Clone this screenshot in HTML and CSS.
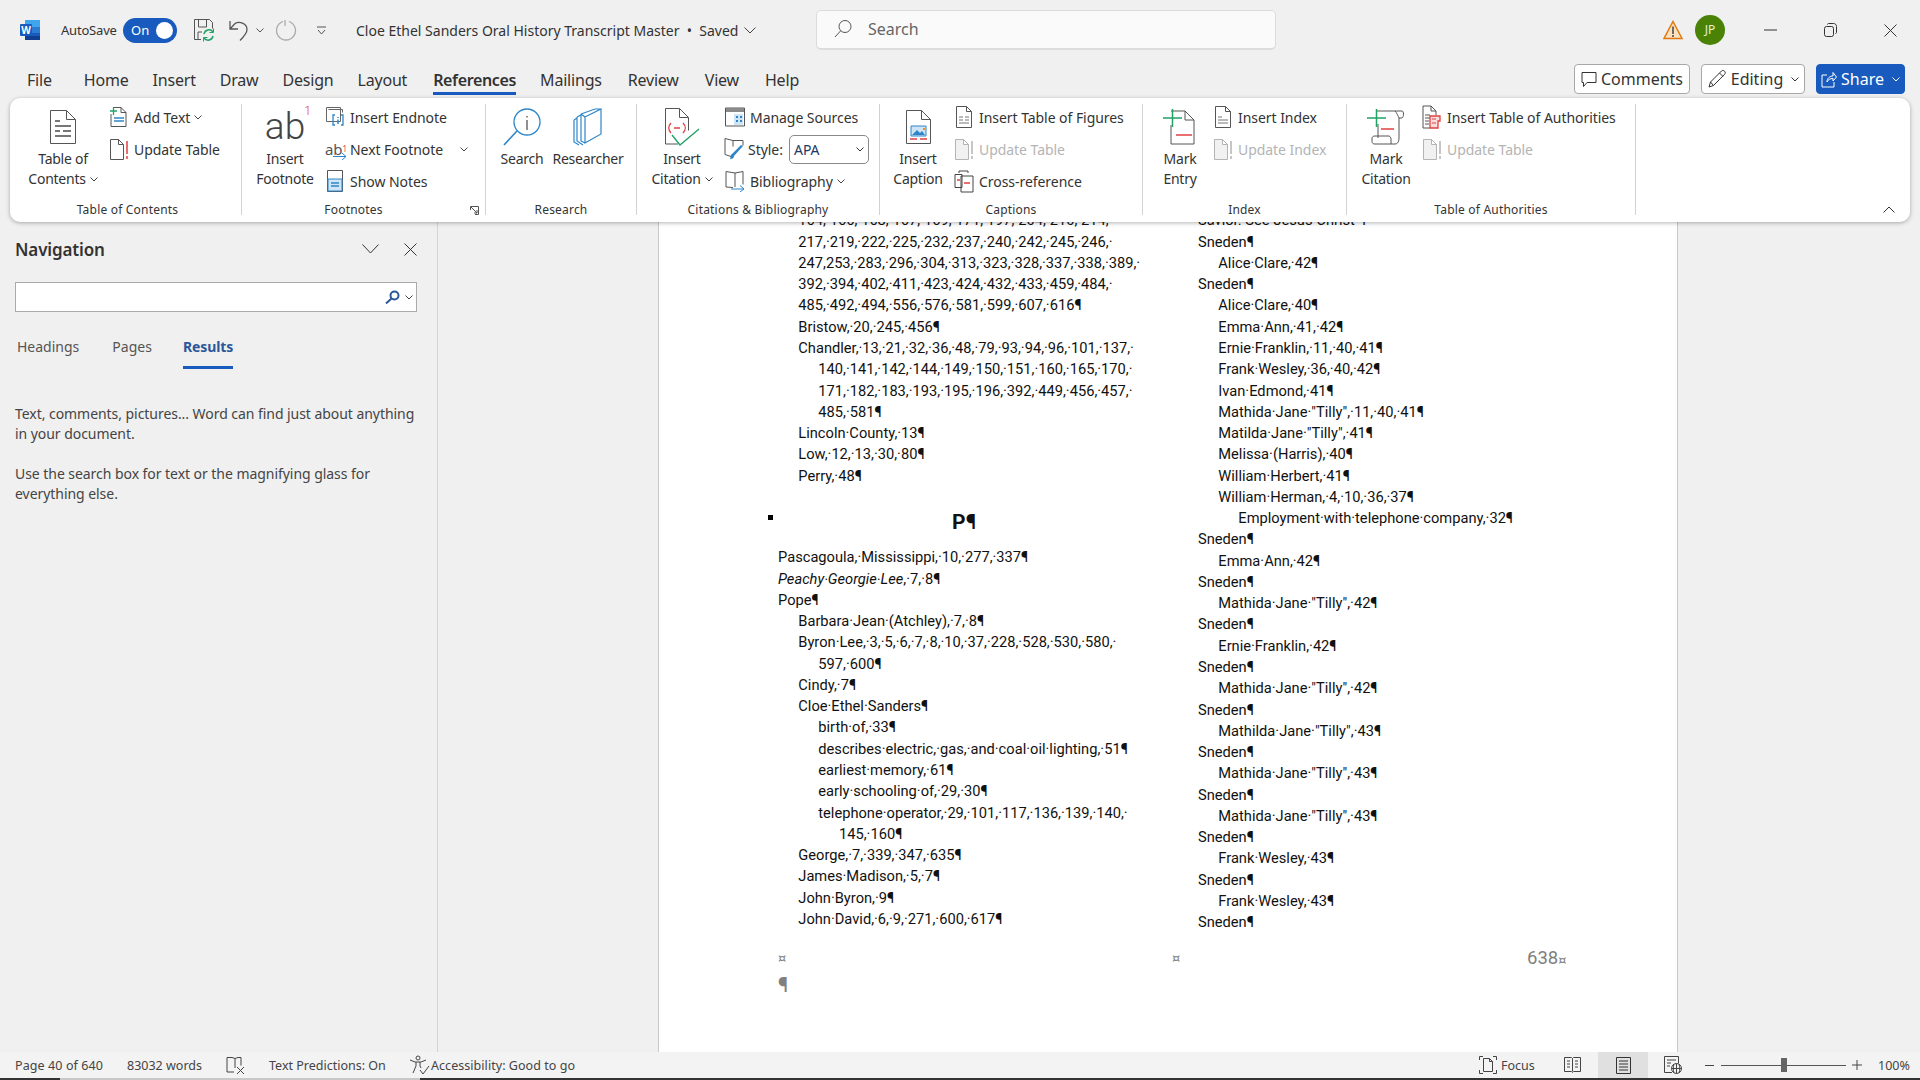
FILE: index.html
```html
<!DOCTYPE html>
<html lang="en">

<head>
	<meta charset="UTF-8">
	<title>Cloe Ethel Sanders Oral History Transcript Master</title>
	<link rel="stylesheet" href="styles.css">
</head>

<body>
	<div class="titlebar">
		<div class="tb_left">
			<svg class="logo" width="20" height="20" viewBox="0 0 20 20"><rect x="5" width="15" height="7" fill="#41a5ee"/><rect x="5" y="7" width="15" height="6" fill="#2b7cd3"/><rect x="5" y="13" width="15" height="7" fill="#185abd"/><rect x="5" y="16" width="15" height="4" fill="#103f91"/><rect y="4" width="12" height="12" rx="1" fill="#185abd"/><text x="6" y="14" font-size="10" font-weight="700" fill="#fff" text-anchor="middle">W</text></svg>
			<span class="autosave">AutoSave</span>
			<span class="toggle">On<i></i></span>
			<svg class="save_ic" width="22" height="24" viewBox="0 0 22 24" fill="none" stroke="#555"><path d="M1.5 1.5h15l3 3v6M8 21.5H1.5v-20M5.5 2v7h8V2M5 21v-7h4"/><path d="M11 16a5 5 0 0 1 9-2M20 18a5 5 0 0 1-9 2" stroke="#21a366" stroke-width="1.5"/><path d="M20.5 10.5v4h-4M10.5 23.5v-4h4" stroke="#21a366"/></svg>
			<svg class="undo_ic" width="19" height="24" viewBox="0 0 19 24" fill="none" stroke="#555" stroke-width="1.3"><path d="M1 3v8h8M1.5 10.5L6 5.5c4-2.5 12-.5 12 6 0 4-3 7-7 11"/></svg>
			<svg class="chev_ic undo_chev" width="8" height="5" viewBox="0 0 8 5" fill="none" stroke="#555"><path d="M.5.5L4 4 7.5.5"/></svg>
			<svg class="redo_ic" width="21" height="24" viewBox="0 0 21 24" fill="none" stroke="#aaa" stroke-width="1.3"><path d="M9 2v6M7 3.5a9.5 9.5 0 1 0 6 0"/></svg>
			<svg class="cust_ic" width="9" height="9" viewBox="0 0 9 9" fill="none" stroke="#555"><path d="M0 1h9M1 4l3.5 4L8 4"/></svg>
			<span class="doc_title">Cloe Ethel Sanders Oral History Transcript Master &nbsp;•&nbsp; Saved</span>
			<svg class="title_chev" width="12" height="7" viewBox="0 0 12 7" fill="none" stroke="#444"><path d="M.5.5L6 6l5.5-5.5"/></svg>
		</div>
		<div class="tb_search">
			<svg width="18" height="20" viewBox="0 0 18 20" fill="none" stroke="#555"><circle cx="11" cy="7.5" r="6"/><path d="M6.5 12L1 18"/></svg>
			<span>Search</span>
		</div>
		<div class="tb_right">
			<svg class="warn_ic" width="20" height="20" viewBox="0 0 20 20"><path d="M10 1.5L19 18.5H1z" fill="#fbe3c0" stroke="#e07a10" stroke-width="1.5"/><path d="M10 6.5v7.5M10 15v2" stroke="#444" stroke-width="1.5"/></svg>
			<span class="avatar">JP</span>
			<svg class="win_min" width="13" height="2" viewBox="0 0 13 2"><path d="M0 1h13" stroke="#333"/></svg>
			<svg class="win_max" width="13" height="14" viewBox="0 0 13 14" fill="none" stroke="#333"><rect x=".5" y="3.5" width="9" height="10" rx="2"/><path d="M3.5 1.5c0-.6.5-1 1-1h5c1.8 0 3 1.2 3 3v6c0 .6-.4 1-1 1"/></svg>
			<svg class="win_close" width="13" height="13" viewBox="0 0 13 13" stroke="#333"><path d="M.5.5l12 12M12.5.5l-12 12"/></svg>
		</div>
	</div>

	<div class="tabbar">
		<span class="tab tab_file">File</span>
		<span class="tab">Home</span>
		<span class="tab">Insert</span>
		<span class="tab">Draw</span>
		<span class="tab">Design</span>
		<span class="tab">Layout</span>
		<span class="tab tab_on">References</span>
		<span class="tab">Mailings</span>
		<span class="tab">Review</span>
		<span class="tab">View</span>
		<span class="tab">Help</span>
		<div class="tab_btns">
			<span class="btn btn_comments"><svg width="16" height="17" viewBox="0 0 16 17" fill="none" stroke="#333"><path d="M1 1.5h14v10H6l-3.5 4v-4H1z"/></svg>Comments</span>
			<span class="btn btn_editing"><svg width="20" height="20" viewBox="0 0 20 20" fill="none" stroke="#333"><path d="M2 18l1.5-5L14.5 2c1-.8 2-.8 3 .2s1 2 .2 3L6.5 16.5zM3.5 13l3 3.5M12.5 4l3.5 3.5"/></svg>Editing<svg class="btn_chev" width="8" height="5" viewBox="0 0 8 5" fill="none" stroke="#333"><path d="M.5.5L4 4 7.5.5"/></svg></span>
			<span class="btn btn_share"><svg width="16" height="18" viewBox="0 0 16 18" fill="none" stroke="#fff"><path d="M6 5H1v12h12v-5M6 12c0-4 3-6 6-6V2.5L15.5 7 12 11V8.5c-3 0-5 1-6 3.5z"/></svg>Share<svg class="btn_chev" width="8" height="5" viewBox="0 0 8 5" fill="none" stroke="#fff"><path d="M.5.5L4 4 7.5.5"/></svg></span>
		</div>
	</div>

	<div class="ribbon">
		<div class="group g_toc">
			<div class="group_body">
				<div class="big">
					<span class="big_ic"><svg width="28" height="36" viewBox="0 0 28 36" fill="none" stroke="#555"><path d="M1.5 1.5h16l9 9v24h-25zM17.5 1.5v9h9"/><path d="M6 12h5M6 17h16M6 22h5M14 22h8M6 27h16" stroke="#777" stroke-width="2"/></svg></span>
					<span class="big_txt">Table of<br>Contents<svg class="chev_ic" width="8" height="5" viewBox="0 0 8 5" fill="none" stroke="#444"><path d="M.5.5L4 4 7.5.5"/></svg></span>
				</div>
				<div class="smalls">
					<div class="sm"><span class="sm_ic"><svg width="19" height="22" viewBox="0 0 19 22" fill="none" stroke="#555"><path d="M5 1.5h7l5 5v14H2V8M12 1.5v5h5"/><path d="M1 5h7M4.5 1v8" stroke="#21a366" stroke-width="1.3"/><path d="M5 12h10M5 15h10" stroke="#2e86c9" stroke-width="1.3"/></svg></span>Add Text<svg class="chev_ic" width="8" height="5" viewBox="0 0 8 5" fill="none" stroke="#444"><path d="M.5.5L4 4 7.5.5"/></svg></div>
					<div class="sm"><span class="sm_ic"><svg width="20" height="23" viewBox="0 0 20 23" fill="none"><path d="M1.5 1.5h8l5 5v15h-13zM9.5 1.5v5h5" stroke="#555"/><path d="M18 3v13M18 18v3" stroke="#e04040" stroke-width="1.5"/></svg></span>Update Table</div>
				</div>
			</div>
			<div class="group_name">Table of Contents</div>
		</div>

		<div class="group g_foot">
			<div class="group_body">
				<div class="big">
					<span class="big_ic ab_ic">ab<sup>1</sup></span>
					<span class="big_txt">Insert<br>Footnote</span>
				</div>
				<div class="smalls">
					<div class="sm"><span class="sm_ic"><svg width="20" height="22" viewBox="0 0 20 22" fill="none"><path d="M1.5 1.5h14v14h-14z" stroke="#666"/><path d="M3.5 3.5h14v3" stroke="#666"/><path d="M10 9H8v10h2M16 9h2v10h-2" stroke="#2e86c9" stroke-width="1.3"/><path d="M13 11v1M13 13.5V18" stroke="#2e86c9" stroke-width="1.5"/></svg></span>Insert Endnote</div>
					<div class="sm"><span class="sm_ic mini_ab">ab<sup>1</sup><svg width="14" height="9" viewBox="0 0 14 9" fill="none" stroke="#2e86c9"><path d="M0 4.5h13M9 1l4 3.5L9 8"/></svg></span>Next Footnote<svg class="chev_ic next_chev" width="8" height="5" viewBox="0 0 8 5" fill="none" stroke="#444"><path d="M.5.5L4 4 7.5.5"/></svg></div>
					<div class="sm"><span class="sm_ic"><svg class="show_ic" width="16" height="22" viewBox="0 0 16 22" fill="none" stroke="#2e86c9"><path d="M.5.5h15v21H.5z" stroke="#555"/><path d="M1 9h14v12H1z" fill="#cfe4f5"/><path d="M4 13h8M4 16h8" stroke-width="1.3"/></svg></span>Show Notes</div>
				</div>
			</div>
			<div class="group_name">Footnotes</div>
			<svg class="launcher" width="9" height="9" viewBox="0 0 9 9" fill="none" stroke="#555"><path d="M.5 4V.5H8.5v8H5M1 1l6 6M7 4v3H4"/></svg>
		</div>

		<div class="group g_res">
			<div class="group_body">
				<div class="big big_search">
					<span class="big_ic"><svg width="38" height="38" viewBox="0 0 38 38" fill="none" stroke="#2e86c9" stroke-width="1.3"><circle cx="24" cy="14" r="13"/><path d="M14 23L1 37" stroke-width="1.6"/><path d="M24 8v1.5M24 12v10" stroke="#555"/></svg></span>
					<span class="big_txt">Search</span>
				</div>
				<div class="big big_researcher">
					<span class="big_ic"><svg width="30" height="38" viewBox="0 0 30 38" fill="none" stroke="#2e86c9" stroke-width="1.2"><path d="M12 9L28 1v25l-16 9zM12 9L8 6M8 6L22 1l6 0M8 6v27l4 2M4 9v24l6 4M4 9l4-2M1 12v22l5 3M1 12l3-2"/></svg></span>
					<span class="big_txt">Researcher</span>
				</div>
			</div>
			<div class="group_name">Research</div>
		</div>

		<div class="group g_cite">
			<div class="group_body">
				<div class="big">
					<span class="big_ic"><svg width="36" height="40" viewBox="0 0 36 40" fill="none"><path d="M14 37H1.5V1.5h14l9 9v13M15.5 1.5v9h9" stroke="#555"/><path d="M7 16c-3 3-3 7 0 10M19 16c3 3 3 7 0 10M10 21h6" stroke="#e04040" stroke-width="1.3"/><path d="M8 28l8 10L35 22" stroke="#21a366" stroke-width="1.4"/></svg></span>
					<span class="big_txt">Insert<br>Citation<svg class="chev_ic" width="8" height="5" viewBox="0 0 8 5" fill="none" stroke="#444"><path d="M.5.5L4 4 7.5.5"/></svg></span>
				</div>
				<div class="smalls">
					<div class="sm"><span class="sm_ic"><svg width="20" height="20" viewBox="0 0 20 20" fill="none"><path d="M.5 1h19v18H.5z" stroke="#555"/><path d="M1 1h18v4H1z" fill="#8a8a8a"/><path d="M9 7h9v11H9z" fill="#cfe4f5"/><path d="M11 9h2v2h-2zM15 9h2v2h-2zM11 13h2v2h-2zM15 13h2v2h-2z" fill="#2e86c9"/></svg></span>Manage Sources</div>
					<div class="sm"><span class="style_ic"><svg width="21" height="24" viewBox="0 0 21 24" fill="none"><path d="M1 1.5l8 2 10 0v5M9 3.5v6M1 1.5v16l6 2" stroke="#555"/><path d="M6 22c3 0 4-1 4-3l9-10-2-1-9 9c-2 1-1 3-2 5z" fill="#2e86c9"/></svg></span><span class="style_lbl">Style:</span><span class="style_sel">APA<svg width="8" height="5" viewBox="0 0 8 5" fill="none" stroke="#333"><path d="M.5.5L4 4 7.5.5"/></svg></span></div>
					<div class="sm"><span class="sm_ic"><svg width="20" height="22" viewBox="0 0 20 22" fill="none"><path d="M10 3v14M1 1.5l9 1.5 8-1.5v13M1 1.5V17l7 .5" stroke="#555"/><path d="M6 19h13M15 15.5l4 3.5-4 3" stroke="#2e86c9"/></svg></span>Bibliography<svg class="chev_ic" width="8" height="5" viewBox="0 0 8 5" fill="none" stroke="#444"><path d="M.5.5L4 4 7.5.5"/></svg></div>
				</div>
			</div>
			<div class="group_name">Citations &amp; Bibliography</div>
		</div>

		<div class="group g_cap">
			<div class="group_body">
				<div class="big">
					<span class="big_ic"><svg width="27" height="36" viewBox="0 0 27 36" fill="none"><path d="M1.5 1.5h15l9 9v24h-24zM16.5 1.5v9h9" stroke="#555"/><path d="M6 17h15v10H6z" fill="#cfe4f5" stroke="#2e86c9"/><path d="M7 26l5-5 3 3 2-2 3 4z" fill="#2e86c9"/><path d="M18 19h2v2h-2z" fill="#e8922c"/><path d="M5 30h7M15 30h7" stroke="#e04040" stroke-width="1.3"/></svg></span>
					<span class="big_txt">Insert<br>Caption</span>
				</div>
				<div class="smalls">
					<div class="sm"><span class="sm_ic"><svg class="tf_ic" width="16" height="22" viewBox="0 0 16 22" fill="none" stroke="#555"><path d="M.5.5h10l5 5v16H.5zM10.5.5v5h5"/><path d="M3 11h4M9 11h4M3 14h4M9 14h4M3 17h10" stroke="#777"/></svg></span>Insert Table of Figures</div>
					<div class="sm sm_off"><span class="sm_ic"><svg width="20" height="23" viewBox="0 0 20 23" fill="none" stroke="#b4b4b4"><path d="M1.5 1.5h8l5 5v15h-13zM9.5 1.5v5h5" fill="#f1f1f1"/><path d="M18 3v13M18 18v3" stroke-width="1.5"/></svg></span>Update Table</div>
					<div class="sm"><span class="sm_ic"><svg width="20" height="23" viewBox="0 0 20 23" fill="none" stroke="#444"><path d="M5 3V1h9v2M1 4.5h7v13H1zM7 6h12v16H7z" fill="#fff"/><path d="M3 10h3M10 13h6" stroke="#e04040" stroke-width="1.4"/></svg></span>Cross-reference</div>
				</div>
			</div>
			<div class="group_name">Captions</div>
		</div>

		<div class="group g_idx">
			<div class="group_body">
				<div class="big">
					<span class="big_ic"><svg width="34" height="38" viewBox="0 0 34 38" fill="none"><path d="M8 3h14l9 9v24H8V17M22 3v9h9" stroke="#555"/><path d="M0 10h19M9.5 1v18" stroke="#21a366" stroke-width="1.5"/><path d="M13 27h16" stroke="#e04040" stroke-width="1.5"/></svg></span>
					<span class="big_txt">Mark<br>Entry</span>
				</div>
				<div class="smalls">
					<div class="sm"><span class="sm_ic"><svg class="tf_ic" width="16" height="22" viewBox="0 0 16 22" fill="none" stroke="#555"><path d="M.5.5h10l5 5v16H.5zM10.5.5v5h5"/><path d="M3 11h4M3 14h10M3 17h10" stroke="#777"/></svg></span>Insert Index</div>
					<div class="sm sm_off"><span class="sm_ic"><svg width="20" height="23" viewBox="0 0 20 23" fill="none" stroke="#b4b4b4"><path d="M1.5 1.5h8l5 5v15h-13zM9.5 1.5v5h5" fill="#f1f1f1"/><path d="M18 3v13M18 18v3" stroke-width="1.5"/></svg></span>Update Index</div>
				</div>
			</div>
			<div class="group_name">Index</div>
		</div>

		<div class="group g_auth">
			<div class="group_body">
				<div class="big">
					<span class="big_ic"><svg width="38" height="38" viewBox="0 0 38 38" fill="none"><path d="M10 3h25c2 0 2 6 0 7h-3v20c0 3-1 6-4 6H8c-3 0-3-2-3-3v-3c0-1 1-2 3-2h14c1 0 2 2 2 3v5M11 16v14M28 3c2 2 3 5 4 7" stroke="#555"/><path d="M0 10h19M9.5 1v18" stroke="#21a366" stroke-width="1.5"/><path d="M14 21h13" stroke="#e04040" stroke-width="1.5"/></svg></span>
					<span class="big_txt">Mark<br>Citation</span>
				</div>
				<div class="smalls">
					<div class="sm"><span class="sm_ic"><svg width="19" height="24" viewBox="0 0 19 24" fill="none"><path d="M8 23H1V1h8l5 5v4M9 1v5h5M3 10h5M3 13h5M3 16h4M3 19h4" stroke="#555"/><path d="M8 11h10v5h-2v7H8z" stroke="#e04040" stroke-width="1.3" fill="#fbdcdc"/><path d="M10 14h4M10 18h4" stroke="#e04040"/></svg></span>Insert Table of Authorities</div>
					<div class="sm sm_off"><span class="sm_ic"><svg width="20" height="23" viewBox="0 0 20 23" fill="none" stroke="#b4b4b4"><path d="M1.5 1.5h8l5 5v15h-13zM9.5 1.5v5h5" fill="#f1f1f1"/><path d="M18 3v13M18 18v3" stroke-width="1.5"/></svg></span>Update Table</div>
				</div>
			</div>
			<div class="group_name">Table of Authorities</div>
		</div>
		<svg class="collapse" width="12" height="7" viewBox="0 0 12 7" fill="none" stroke="#333"><path d="M.5 6.5L6 1l5.5 5.5"/></svg>
	</div>

	<div class="main">
		<div class="nav">
			<div class="nav_head">
				<span class="nav_title">Navigation</span>
				<svg class="nav_chev" width="17" height="10" viewBox="0 0 17 10" fill="none" stroke="#333"><path d="M.5.5l8 8.5 8-8.5"/></svg>
				<svg class="nav_x" width="13" height="13" viewBox="0 0 13 13" stroke="#333"><path d="M.5.5l12 12M12.5.5l-12 12"/></svg>
			</div>
			<div class="nav_search">
				<svg width="15" height="14" viewBox="0 0 15 14" fill="none" stroke="#2b579a" stroke-width="2"><circle cx="9.5" cy="5.5" r="4"/><path d="M6.5 8.5L1 13.5"/></svg>
				<svg width="8" height="5" viewBox="0 0 8 5" fill="none" stroke="#444"><path d="M.5.5L4 4 7.5.5"/></svg>
			</div>
			<div class="nav_tabs">
				<span>Headings</span>
				<span>Pages</span>
				<span class="nav_on">Results</span>
			</div>
			<p class="nav_txt">Text, comments, pictures... Word can find just about anything in your document.</p>
			<p class="nav_txt">Use the search box for text or the magnifying glass for everything else.</p>
		</div>

		<div class="docarea">
			<div class="page">
				<div class="cols">
					<div class="col">
						<p class="lv1">164,·166,·168,·167,·169,·171,·197,·204,·210,·214,·</p>
						<p class="lv1">217,·219,·222,·225,·232,·237,·240,·242,·245,·246,·</p>
						<p class="lv1">247,253,·283,·296,·304,·313,·323,·328,·337,·338,·389,·</p>
						<p class="lv1">392,·394,·402,·411,·423,·424,·432,·433,·459,·484,·</p>
						<p class="lv1">485,·492,·494,·556,·576,·581,·599,·607,·616¶</p>
						<p class="lv1">Bristow,·20,·245,·456¶</p>
						<p class="lv1">Chandler,·13,·21,·32,·36,·48,·79,·93,·94,·96,·101,·137,·</p>
						<p class="lv2">140,·141,·142,·144,·149,·150,·151,·160,·165,·170,·</p>
						<p class="lv2">171,·182,·183,·193,·195,·196,·392,·449,·456,·457,·</p>
						<p class="lv2">485,·581¶</p>
						<p class="lv1">Lincoln·County,·13¶</p>
						<p class="lv1">Low,·12,·13,·30,·80¶</p>
						<p class="lv1">Perry,·48¶</p>
						<h2 class="letter">P¶</h2>
						<p class="lv0">Pascagoula,·Mississippi,·10,·277,·337¶</p>
						<p class="lv0"><em>Peachy·Georgie·Lee</em>,·7,·8¶</p>
						<p class="lv0">Pope¶</p>
						<p class="lv1">Barbara·Jean·(Atchley),·7,·8¶</p>
						<p class="lv1">Byron·Lee,·3,·5,·6,·7,·8,·10,·37,·228,·528,·530,·580,·</p>
						<p class="lv2">597,·600¶</p>
						<p class="lv1">Cindy,·7¶</p>
						<p class="lv1">Cloe·Ethel·Sanders¶</p>
						<p class="lv2">birth·of,·33¶</p>
						<p class="lv2">describes·electric,·gas,·and·coal·oil·lighting,·51¶</p>
						<p class="lv2">earliest·memory,·61¶</p>
						<p class="lv2">early·schooling·of,·29,·30¶</p>
						<p class="lv2">telephone·operator,·29,·101,·117,·136,·139,·140,·</p>
						<p class="lv3">145,·160¶</p>
						<p class="lv1">George,·7,·339,·347,·635¶</p>
						<p class="lv1">James·Madison,·5,·7¶</p>
						<p class="lv1">John·Byron,·9¶</p>
						<p class="lv1">John·David,·6,·9,·271,·600,·617¶</p>
					</div>
					<div class="col">
						<p class="lv0">Savior.·See·Jesus·Christ·¶</p>
						<p class="lv0">Sneden¶</p>
						<p class="lv1">Alice·Clare,·42¶</p>
						<p class="lv0">Sneden¶</p>
						<p class="lv1">Alice·Clare,·40¶</p>
						<p class="lv1">Emma·Ann,·41,·42¶</p>
						<p class="lv1">Ernie·Franklin,·11,·40,·41¶</p>
						<p class="lv1">Frank·Wesley,·36,·40,·42¶</p>
						<p class="lv1">Ivan·Edmond,·41¶</p>
						<p class="lv1">Mathida·Jane·"Tilly",·11,·40,·41¶</p>
						<p class="lv1">Matilda·Jane·"Tilly",·41¶</p>
						<p class="lv1">Melissa·(Harris),·40¶</p>
						<p class="lv1">William·Herbert,·41¶</p>
						<p class="lv1">William·Herman,·4,·10,·36,·37¶</p>
						<p class="lv2">Employment·with·telephone·company,·32¶</p>
						<p class="lv0">Sneden¶</p>
						<p class="lv1">Emma·Ann,·42¶</p>
						<p class="lv0">Sneden¶</p>
						<p class="lv1">Mathida·Jane·"Tilly",·42¶</p>
						<p class="lv0">Sneden¶</p>
						<p class="lv1">Ernie·Franklin,·42¶</p>
						<p class="lv0">Sneden¶</p>
						<p class="lv1">Mathida·Jane·"Tilly",·42¶</p>
						<p class="lv0">Sneden¶</p>
						<p class="lv1">Mathilda·Jane·"Tilly",·43¶</p>
						<p class="lv0">Sneden¶</p>
						<p class="lv1">Mathida·Jane·"Tilly",·43¶</p>
						<p class="lv0">Sneden¶</p>
						<p class="lv1">Mathida·Jane·"Tilly",·43¶</p>
						<p class="lv0">Sneden¶</p>
						<p class="lv1">Frank·Wesley,·43¶</p>
						<p class="lv0">Sneden¶</p>
						<p class="lv1">Frank·Wesley,·43¶</p>
						<p class="lv0">Sneden¶</p>
					</div>
				</div>
				<div class="page_foot">
					<span class="pf_a">¤</span>
					<span class="pf_b">¤</span>
					<span class="pf_num">638<small>¤</small></span>
				</div>
				<div class="page_end">¶</div>
			</div>
		</div>
	</div>

	<div class="status">
		<span class="st_page">Page 40 of 640</span>
		<span class="st_words">83032 words</span>
		<svg class="st_proof" width="19" height="19" viewBox="0 0 19 19" fill="none" stroke="#444"><path d="M1 1.5h5l3 1 3-1h3v8M9 3v9M1 1.5V16h7"/><path d="M11 11l7 7M18 11l-7 7"/></svg>
		<span class="st_pred">Text Predictions: On</span>
		<svg class="st_acc" width="21" height="20" viewBox="0 0 21 20" fill="none" stroke="#444"><circle cx="9" cy="3" r="2"/><path d="M1 5l5 2h6l5-2M7 7v4l-3 7M11 7v4l1 2M11 15l3 4 6-8"/></svg>
		<span class="st_a11y">Accessibility: Good to go</span>
		<div class="st_right">
			<svg width="18" height="18" viewBox="0 0 18 18" fill="none" stroke="#444"><path d="M.5 4V.5H4M14 .5h3.5V4M.5 14v3.5H4M14 17.5h3.5V14"/><path d="M4.5 2.5h6l3 3v10h-9zM10.5 2.5v3h3"/></svg>
			<span class="st_focus">Focus</span>
			<svg class="st_read" width="17" height="16" viewBox="0 0 17 16" fill="none" stroke="#444"><path d="M.5.5h7l1 1 1-1h7v14h-7l-1 1-1-1h-7zM8.5 1.5v13M3 4h3M3 7h3M3 10h3M11 4h3M11 7h3M11 10h3"/></svg>
			<span class="st_print"><svg width="15" height="17" viewBox="0 0 15 17" fill="none" stroke="#333"><path d="M.5.5h14v16H.5zM3 4h9M3 7h9M3 10h9M3 13h9"/></svg></span>
			<svg class="st_web" width="18" height="18" viewBox="0 0 18 18" fill="none" stroke="#444"><path d="M8 16.5H.5V.5h14v7M3 4h9M3 7h4M3 10h3"/><circle cx="12.5" cy="12.5" r="5" fill="#f3f3f3"/><path d="M7.5 12.5h10M12.5 7.5v10M10 8c-1 3-1 6 0 9M15 8c1 3 1 6 0 9"/></svg>
			<svg class="st_minus" width="9" height="9" viewBox="0 0 9 9" stroke="#444"><path d="M0 4.5h9"/></svg>
			<span class="st_slider"><i></i></span>
			<svg class="st_plus" width="10" height="10" viewBox="0 0 10 10" stroke="#444"><path d="M0 5h10M5 0v10"/></svg>
			<span class="st_zoom">100%</span>
		</div>
	</div>
	<div class="taskstrip"><i></i><b></b><i class="rest"></i></div>
</body>

</html>
```

FILE: styles.css
```css
* {
	margin: 0;
	padding: 0;
	box-sizing: border-box;
}

html, body {
	height: 100%;
}

body {
	width: 1920px;
	height: 1080px;
	overflow: hidden;
	display: flex;
	flex-direction: column;
	background: #f0f0f0;
	color: #333;
	font-family: "Noto Sans", "Open Sans", sans-serif;
	font-size: 14px;
}

svg {
	flex: none;
	display: block;
}

/* title bar */
.titlebar {
	height: 60px;
	flex: none;
	display: flex;
	align-items: center;
}

.tb_left {
	width: 816px;
	display: flex;
	align-items: center;
}

.logo {
	margin-left: 20px;
}

.autosave {
	margin-left: 21px;
	font-size: 13px;
	letter-spacing: -.2px;
	width: 62px;
}

.toggle {
	width: 54px;
	height: 25px;
	border-radius: 13px;
	background: #185abd;
	color: #fff;
	font-size: 13px;
	line-height: 25px;
	padding-left: 8px;
	position: relative;
}

.toggle i {
	position: absolute;
	right: 4px;
	top: 4px;
	width: 17px;
	height: 17px;
	border-radius: 50%;
	background: #fff;
}

.save_ic {
	margin-left: 16px;
}

.undo_ic {
	margin-left: 14px;
}

.undo_chev {
	margin-left: 8px;
}

.redo_ic {
	margin-left: 12px;
}

.cust_ic {
	margin-left: 20px;
}

.doc_title {
	margin-left: 30px;
	font-size: 14px;
	white-space: nowrap;
}

.title_chev {
	margin-left: 6px;
}

.tb_search {
	width: 460px;
	height: 40px;
	display: flex;
	align-items: center;
	padding-left: 17px;
	padding-bottom: 2px;
	background: #fafafa;
	border: 1px solid #dcdcdc;
	border-bottom-width: 2px;
	border-radius: 5px;
	color: #666;
	font-size: 16px;
}

.tb_search span {
	margin-left: 16px;
}

.tb_right {
	flex: 1;
	display: flex;
	align-items: center;
	justify-content: flex-end;
	padding-right: 23px;
}

.avatar {
	width: 30px;
	height: 30px;
	margin-left: 12px;
	border-radius: 50%;
	background: #498205;
	color: #e8f0d8;
	font-size: 12px;
	line-height: 30px;
	text-align: center;
}

.win_min {
	margin-left: 39px;
}

.win_max {
	margin-left: 47px;
}

.win_close {
	margin-left: 47px;
}

/* tabs */
.tabbar {
	height: 38px;
	flex: none;
	display: flex;
	padding-left: 27px;
	font-size: 16px;
	letter-spacing: -.2px;
}

.tab {
	height: 35px;
	margin-right: 24px;
	line-height: 40px;
	white-space: nowrap;
}

.tab_file {
	margin-right: 32px;
}

.tab_on {
	margin-left: 2px;
	font-weight: 600;
	letter-spacing: -.35px;
	border-bottom: 3px solid #185abd;
}

.tab_on ~ .tab {
	margin-right: 26px;
}

.tab_btns {
	margin-left: auto;
	margin-right: 15px;
	margin-top: 4px;
	display: flex;
	gap: 11px;
	letter-spacing: 0;
}

.btn {
	height: 30px;
	display: flex;
	align-items: center;
	justify-content: center;
	gap: 4px;
	background: #fff;
	border: 1px solid #a8a8a8;
	border-radius: 4px;
}

.btn_comments {
	width: 116px;
}

.btn_editing {
	width: 104px;
}

.btn_share {
	width: 89px;
	background: #185abd;
	border-color: #185abd;
	color: #fff;
}

.btn_chev {
	margin-left: 4px;
}

/* ribbon */
.ribbon {
	position: relative;
	z-index: 2;
	flex: none;
	width: 1900px;
	height: 124px;
	margin-left: 10px;
	padding-top: 6px;
	display: flex;
	align-items: flex-start;
	background: #fff;
	border-radius: 10px;
	box-shadow: 0 1px 4px rgba(0, 0, 0, .3);
}

.group {
	position: relative;
	height: 111px;
	display: flex;
	flex-direction: column;
	border-right: 1px solid #d2d2d2;
}

.g_toc { width: 232px; }
.g_foot { width: 244px; }
.g_res { width: 151px; }
.g_cite { width: 243px; }
.g_cap { width: 263px; }
.g_idx { width: 204px; }
.g_auth { width: 289px; }

.group_body {
	height: 97px;
	display: flex;
}

.group_name {
	height: 14px;
	line-height: 18px;
	font-size: 12px;
	text-align: center;
	letter-spacing: .2px;
	white-space: nowrap;
}

.g_toc .group_name {
	padding-left: 4px;
}

.g_foot .group_name {
	padding-right: 20px;
}

.launcher {
	position: absolute;
	right: 6px;
	bottom: 0;
}

.big {
	display: flex;
	flex-direction: column;
	align-items: center;
	flex: none;
	white-space: nowrap;
}

.g_toc .big { width: 92px; margin-left: 7px; }
.g_foot .big { width: 80px; margin-left: 3px; }
.g_cite .big { width: 86px; margin-left: 2px; }
.g_cap .big { width: 72px; margin-left: 2px; }
.g_idx .big { width: 66px; margin-left: 4px; }
.g_auth .big { width: 72px; margin-left: 3px; }
.big_search { width: 64px; margin-left: 4px; }
.big_researcher { width: 68px; }

.big_ic {
	height: 45px;
	display: flex;
	align-items: center;
	justify-content: center;
}

.big_txt {
	text-align: center;
	line-height: 20px;
	letter-spacing: -.25px;
}

.big_txt .chev_ic, .sm .chev_ic {
	display: inline-block;
	margin-left: 4px;
	vertical-align: 2px;
}

.ab_ic {
	position: relative;
	font-family: Roboto, sans-serif;
	font-size: 37px;
	font-weight: 300;
	color: #444;
	line-height: 40px;
}

.ab_ic sup {
	position: absolute;
	right: -6px;
	top: 0;
	font-size: 13px;
	line-height: 14px;
	color: #e04040;
}

.smalls {
	display: flex;
	flex-direction: column;
	gap: 4px;
	margin-top: -1px;
}

.sm {
	height: 28px;
	display: flex;
	align-items: center;
	white-space: nowrap;
	letter-spacing: -.05px;
}

.sm_ic {
	width: 25px;
	flex: none;
	display: flex;
	align-items: center;
}

.sm_off {
	color: #b4b4b4;
}

.show_ic, .tf_ic {
	margin-left: 2px;
}

.mini_ab {
	position: relative;
	height: 24px;
	font-size: 15px;
	line-height: 20px;
	color: #555;
}

.mini_ab sup {
	font-size: 8px;
	line-height: 8px;
	color: #e04040;
	vertical-align: 6px;
}

.mini_ab svg {
	position: absolute;
	left: 8px;
	bottom: 0;
}

.next_chev {
	margin-left: 17px !important;
}

.style_ic {
	width: 24px;
	margin-left: -1px;
}

.style_lbl {
	width: 41px;
}

.style_sel {
	width: 80px;
	height: 29px;
	display: flex;
	align-items: center;
	justify-content: space-between;
	padding: 0 4px;
	border: 1px solid #8a8a8a;
	border-radius: 5px;
	color: #1f3864;
}

.collapse {
	position: absolute;
	right: 15px;
	top: 108px;
}

/* navigation and page */
.main {
	flex: 1;
	display: flex;
	min-height: 0;
}

.nav {
	width: 438px;
	flex: none;
	padding: 15px 20px 0 15px;
	border-right: 1px solid #d4d4d4;
}

.nav_head {
	height: 24px;
	display: flex;
	align-items: center;
}

.nav_title {
	font-size: 17px;
	font-weight: 600;
	letter-spacing: -.15px;
	margin-right: auto;
}

.nav_x {
	margin-left: 25px;
}

.nav_search {
	width: 402px;
	height: 30px;
	margin-top: 21px;
	display: flex;
	align-items: center;
	justify-content: flex-end;
	gap: 5px;
	padding-right: 3px;
	background: #fff;
	border: 1px solid #aaa;
}

.nav_tabs {
	margin-top: 22px;
	margin-left: 2px;
	display: flex;
	gap: 33px;
	color: #555;
}

.nav_tabs span {
	height: 35px;
	line-height: 26px;
}

.nav_on {
	margin-left: -2px;
	color: #2b579a;
	font-weight: 700;
	letter-spacing: -.1px;
	border-bottom: 3px solid #185abd;
}

.nav_txt {
	line-height: 20px;
	width: 402px;
	color: #444;
	letter-spacing: -.05px;
	margin-bottom: 20px;
}

.nav_tabs + .nav_txt {
	margin-top: 35px;
}

.docarea {
	flex: 1;
	min-width: 0;
}

.page {
	width: 1020px;
	height: 100%;
	margin-left: 220px;
	padding-left: 119px;
	overflow: hidden;
	background: #fff;
	border-left: 1px solid #c8c8c8;
	border-right: 1px solid #c8c8c8;
	color: #111;
	font-family: Roboto, "Liberation Sans", sans-serif;
	font-size: 14.67px;
}

.cols {
	display: grid;
	grid-template-columns: 420px 1fr;
	margin-top: -11.6px;
}

.col p {
	height: 21.27px;
	line-height: 21.27px;
	white-space: nowrap;
}

.lv1 { padding-left: 20.3px; }
.lv2 { padding-left: 40.3px; }
.lv3 { padding-left: 61px; }

.letter {
	position: relative;
	width: 372px;
	height: 30px;
	margin: 20px 0 10.5px;
	line-height: 30px;
	font-size: 21px;
	text-align: center;
}

/* paragraph format mark */
.letter::before {
	content: "";
	position: absolute;
	left: -10px;
	top: 8px;
	width: 5px;
	height: 5px;
	background: #000;
}

.page_foot {
	display: flex;
	align-items: center;
	height: 21px;
	margin-top: 14px;
	color: #808080;
}

.pf_a, .pf_b, .pf_num small {
	font-family: "DejaVu Sans", sans-serif;
	font-size: 13px;
}

.pf_a {
	width: 394px;
}

.pf_b {
	width: 355px;
}

.pf_num {
	font-size: 18.5px;
}

.page_end {
	margin-top: 6px;
	color: #808080;
	font-size: 21px;
	line-height: 22px;
}

/* status bar */
.status {
	height: 26px;
	flex: none;
	display: flex;
	align-items: center;
	background: #f3f3f3;
	padding-left: 15px;
	font-size: 12.5px;
	color: #444;
	white-space: nowrap;
}

.st_page { width: 112px; letter-spacing: .1px; }
.st_words { width: 99px; }
.st_pred { margin-left: 24px; width: 116px; }
.st_acc { margin-left: 24px; }
.st_a11y { margin-left: 1px; letter-spacing: .05px; }

.st_right {
	margin-left: auto;
	padding-right: 10px;
	display: flex;
	align-items: center;
}

.st_focus { margin-left: 4px; width: 32px; }
.st_read { margin-left: 31px; }

.st_print {
	width: 50px;
	height: 26px;
	margin-left: 17px;
	display: flex;
	align-items: center;
	justify-content: center;
	background: #e0e0e0;
}

.st_web { margin-left: 16px; }
.st_minus { margin-left: 23px; }

.st_slider {
	position: relative;
	width: 125px;
	height: 1px;
	margin-left: 7px;
	background: #555;
}

.st_slider i {
	position: absolute;
	left: 60px;
	top: -7px;
	width: 6px;
	height: 14px;
	background: #666;
}

.st_plus { margin-left: 6px; }
.st_zoom { margin-left: 16px; width: 32px; }

.taskstrip {
	height: 2px;
	flex: none;
	display: flex;
}

.taskstrip i {
	width: 60px;
	background: #333;
}

.taskstrip b {
	width: 360px;
	background: #c8c8c8;
}

.taskstrip .rest {
	flex: 1;
}
```
